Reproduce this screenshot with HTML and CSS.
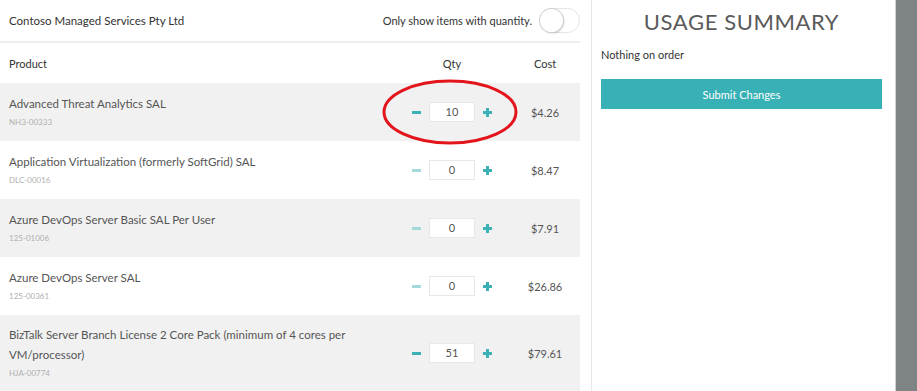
FILE: index.html
```html
<!doctype html>
<html lang="en">
  <head>
    <meta charset="UTF-8" />
    <meta name="viewport" content="width=device-width, initial-scale=1.0" />
    <title>Usage Summary</title>
    <link rel="stylesheet" href="styles.css">
  </head>
  <body>
    <div class="page">
      <!-- Lista de productos -->
      <section class="catalog">
        <div class="catalog-inner">
          <header class="top-bar">
            <span class="company">Contoso Managed Services Pty Ltd</span>
            <label class="filter">
              <span>Only show items with quantity.</span>
              <span class="toggle"><span class="knob"></span></span>
            </label>
          </header>

          <div class="row head">
            <span>Product</span>
            <span class="center">Qty</span>
            <span class="center">Cost</span>
          </div>

          <div class="row item shaded">
            <div class="name">
              <p class="title">Advanced Threat Analytics SAL</p>
              <p class="code">NH3-00333</p>
            </div>
            <div class="qty">
              <span class="btn minus"></span>
              <span class="box">10</span>
              <span class="btn plus"></span>
              <svg class="mark" viewBox="0 0 140 70">
                <ellipse cx="70" cy="35" rx="66" ry="31" fill="none" stroke="#e3141b" stroke-width="3"/>
              </svg>
            </div>
            <span class="cost">$4.26</span>
          </div>

          <div class="row item">
            <div class="name">
              <p class="title">Application Virtualization (formerly SoftGrid) SAL</p>
              <p class="code">DLC-00016</p>
            </div>
            <div class="qty">
              <span class="btn minus off"></span>
              <span class="box">0</span>
              <span class="btn plus"></span>
            </div>
            <span class="cost">$8.47</span>
          </div>

          <div class="row item shaded">
            <div class="name">
              <p class="title">Azure DevOps Server Basic SAL Per User</p>
              <p class="code">125-01006</p>
            </div>
            <div class="qty">
              <span class="btn minus off"></span>
              <span class="box">0</span>
              <span class="btn plus"></span>
            </div>
            <span class="cost">$7.91</span>
          </div>

          <div class="row item">
            <div class="name">
              <p class="title">Azure DevOps Server SAL</p>
              <p class="code">125-00361</p>
            </div>
            <div class="qty">
              <span class="btn minus off"></span>
              <span class="box">0</span>
              <span class="btn plus"></span>
            </div>
            <span class="cost">$26.86</span>
          </div>

          <div class="row item shaded">
            <div class="name">
              <p class="title">BizTalk Server Branch License 2 Core Pack (minimum of 4 cores per VM/processor)</p>
              <p class="code">HJA-00774</p>
            </div>
            <div class="qty">
              <span class="btn minus"></span>
              <span class="box">51</span>
              <span class="btn plus"></span>
            </div>
            <span class="cost">$79.61</span>
          </div>
        </div>
      </section>

      <!-- Resumen -->
      <aside class="summary">
        <h1>USAGE SUMMARY</h1>
        <p class="empty">Nothing on order</p>
        <button class="submit">Submit Changes</button>
      </aside>

      <div class="rail"></div>
    </div>
  </body>
</html>
```

FILE: styles.css
```css
* {
  margin: 0;
  padding: 0;
  box-sizing: border-box;
}

body {
  font-family: Lato, 'Open Sans', Arial, sans-serif;
  font-size: 11.5px;
  color: #555;
  background: #fff;
  overflow: hidden;
}

.page {
  display: flex;
  height: 391px;
}

.catalog {
  width: 592px;
  border-right: 1px solid #e8e8e8;
}

.catalog-inner {
  width: 580px;
}

.top-bar {
  height: 43px;
  display: flex;
  align-items: center;
  justify-content: space-between;
  padding-left: 9px;
  border-bottom: 2px solid #eeeeee;
  color: #333;
}

.filter {
  display: flex;
  align-items: center;
  gap: 7px;
  font-size: 11px;
}

.toggle {
  position: relative;
  width: 41px;
  height: 25px;
  border: 1px solid #e4e4e4;
  border-radius: 13px;
  background: #fff;
}

.knob {
  position: absolute;
  top: 0;
  left: 0;
  width: 23px;
  height: 23px;
  border-radius: 50%;
  background: #fff;
  box-shadow: 0 0 0 1px #d0d0d0, 1px 1px 2px rgba(0,0,0,0.25);
}

.row {
  display: grid;
  grid-template-columns: 1fr 80px 60px;
  column-gap: 23px;
  align-items: center;
  padding: 0 5px 0 9px;
}

.row.head {
  height: 40px;
  color: #333;
  font-size: 11px;
}

.center {
  text-align: center;
}

.item {
  min-height: 58px;
  padding-top: 10px;
  padding-bottom: 10px;
}

.item.shaded {
  background: #f1f1f1;
}

.title {
  line-height: 20px;
  color: #555;
}

.code {
  font-size: 8px;
  line-height: 16px;
  color: #b0b0b0;
}

.qty {
  position: relative;
  display: flex;
  align-items: center;
  justify-content: center;
  gap: 8px;
}

.btn {
  position: relative;
  width: 9px;
  height: 3px;
  background: #3bb1b5;
}

.minus.off {
  background: #a3d9db;
}

.plus::after {
  content: "";
  position: absolute;
  left: 3px;
  top: -3px;
  width: 3px;
  height: 9px;
  background: #3bb1b5;
}

.box {
  width: 47px;
  height: 20px;
  line-height: 18px;
  border: 1px solid #e8e8e8;
  background: #fff;
  text-align: center;
  color: #555;
  font-size: 11px;
}

.mark {
  position: absolute;
  left: -32px;
  top: -25px;
  width: 140px;
  height: 70px;
  pointer-events: none;
}

.cost {
  text-align: center;
  color: #555;
  font-size: 11px;
}

.summary {
  flex: 1;
  padding: 0 13px 0 9px;
}

.summary h1 {
  margin-top: 7px;
  font-size: 22px;
  font-weight: 400;
  line-height: 30px;
  letter-spacing: 0.6px;
  text-align: center;
  color: #5a5a5a;
}

.empty {
  margin-top: 11px;
  line-height: 14px;
  color: #333;
  font-size: 11px;
}

.submit {
  display: block;
  width: 100%;
  height: 30px;
  margin-top: 17px;
  border: none;
  background: #37b1b5;
  color: #fff;
  font-family: inherit;
  font-size: 11px;
}

.rail {
  width: 22px;
  border-left: 1px solid #cfd2d2;
  background: #7e8484;
}
```
